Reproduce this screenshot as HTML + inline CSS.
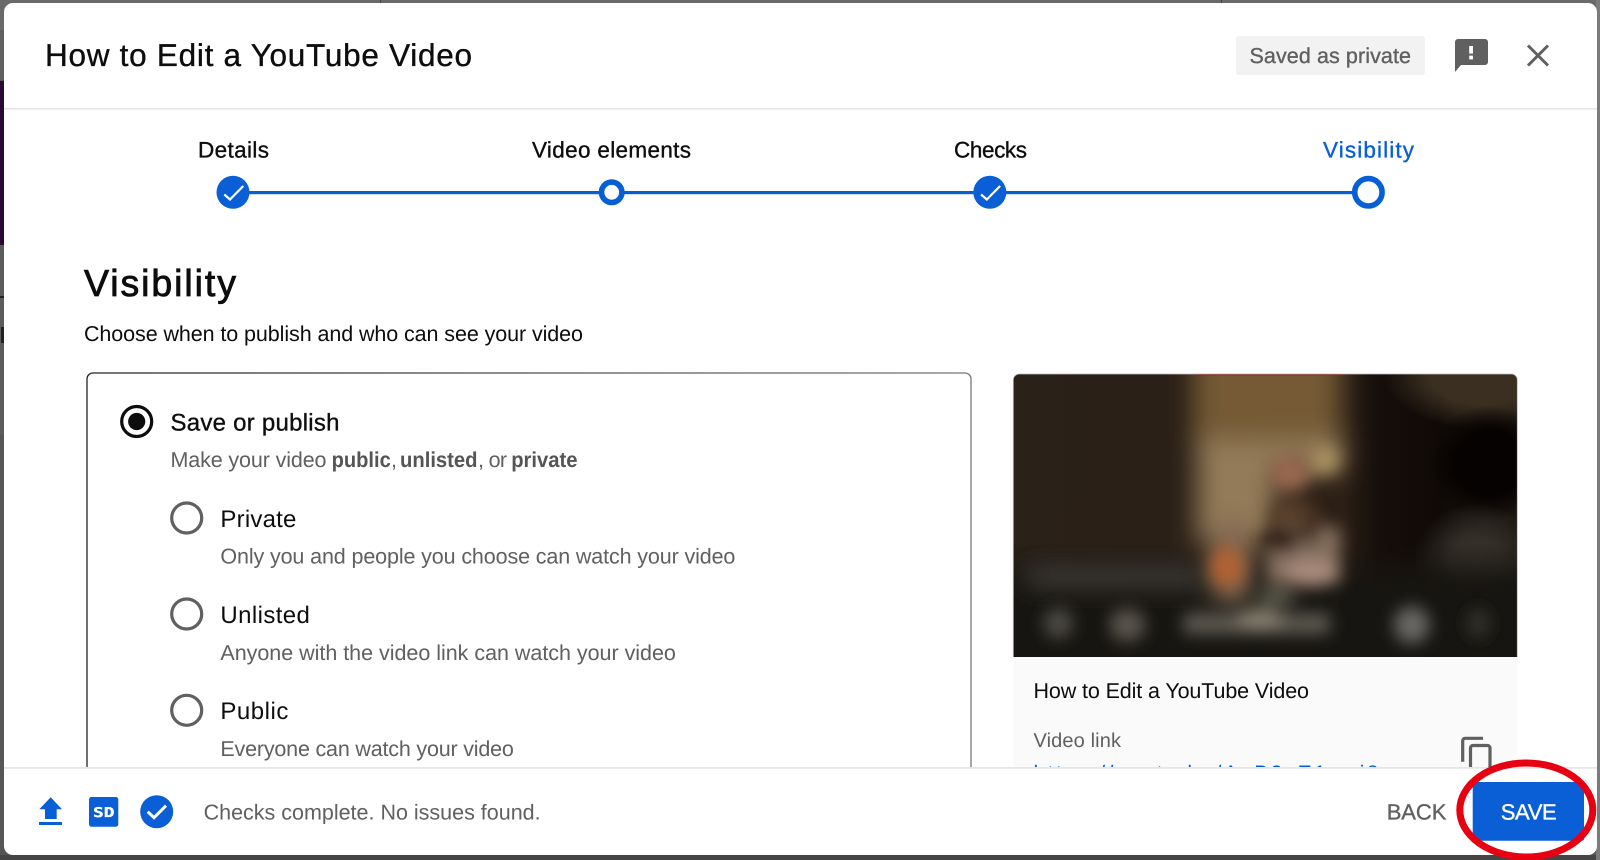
<!DOCTYPE html>
<html lang="en">
<head>
<meta charset="utf-8">
<title>How to Edit a YouTube Video - Visibility</title>
<style>
html,body{margin:0;padding:0;width:1600px;height:860px;overflow:hidden;background:#555}
svg{display:block;position:absolute;left:0;top:0}
text{font-family:"Liberation Sans",Arial,sans-serif;text-rendering:geometricPrecision}
.m{stroke-width:.35px;paint-order:stroke}
.g{fill:#606060}
.k{fill:#0d0d0d}
</style>
</head>
<body>
<svg width="1600" height="860" viewBox="0 0 1600 860" xmlns="http://www.w3.org/2000/svg">
<defs>
<filter id="b" x="-30%" y="-30%" width="160%" height="160%"><feGaussianBlur stdDeviation="38"/></filter>
<filter id="b2" x="-30%" y="-30%" width="160%" height="160%"><feGaussianBlur stdDeviation="24"/></filter>
<clipPath id="tc"><path d="M1013.300 380a6 6 0 0 1 6-6h492a6 6 0 0 1 6 6v277h-504z"/></clipPath>
<clipPath id="body"><rect x="0" y="110" width="1600" height="657"/></clipPath>
<linearGradient id="cs" gradientUnits="userSpaceOnUse" x1="87" y1="0" x2="971" y2="0"><stop offset="0" stop-color="#222"/><stop offset="1" stop-color="#777"/></linearGradient>
<linearGradient id="hb" gradientUnits="userSpaceOnUse" x1="0" y1="0" x2="1536" y2="0">
<stop offset="0" stop-color="#2a2118"/>
<stop offset=".65" stop-color="#2b1f16"/>
<stop offset=".72" stop-color="#150e0a"/>
<stop offset=".84" stop-color="#100a07"/>
<stop offset=".93" stop-color="#1c1610"/>
<stop offset="1" stop-color="#1e1812"/>
</linearGradient>
<linearGradient id="vb" gradientUnits="userSpaceOnUse" x1="0" y1="520" x2="0" y2="650">
<stop offset="0" stop-color="#171511" stop-opacity="0"/>
<stop offset="1" stop-color="#171511"/>
</linearGradient>
<radialGradient id="r1"><stop offset="0" stop-color="#3b2f21"/><stop offset=".55" stop-color="#3b2f21"/><stop offset="1" stop-color="#3b2f21" stop-opacity="0"/></radialGradient>
<radialGradient id="r2"><stop offset="0" stop-color="#060201"/><stop offset=".55" stop-color="#060201"/><stop offset="1" stop-color="#060201" stop-opacity="0"/></radialGradient>
<radialGradient id="r3"><stop offset="0" stop-color="#37322b"/><stop offset=".4" stop-color="#332e27"/><stop offset="1" stop-color="#332e27" stop-opacity="0"/></radialGradient>
</defs>

<!-- backdrop -->
<rect width="1600" height="860" fill="#565656"/>
<rect width="1600" height="30" fill="#696969"/>
<rect x="0" y="30" width="4" height="50" fill="#5f5f5f"/>
<rect x="0" y="81" width="4" height="164" fill="#2a0a35"/>
<rect x="0" y="245" width="4" height="190" fill="#5c5c5c"/>
<rect x="0" y="296" width="4" height="2" fill="#222"/>
<rect x="1" y="327" width="3" height="16" fill="#222"/>
<rect x="0" y="855" width="1600" height="5" fill="#454545"/>
<rect x="1596" y="0" width="4" height="860" fill="#7b7b7b"/>
<rect x="380" y="0" width="1" height="3" fill="#444"/>
<rect x="1221" y="0" width="1" height="3" fill="#444"/>

<!-- modal -->
<rect x="4" y="3" width="1593" height="852" rx="9" fill="#fff"/>
<rect x="4" y="108" width="1593" height="1.600" fill="#e6e6e6"/>

<!-- header -->
<text x="45" y="66" font-size="31.500" class="k m" stroke="#0d0d0d" textLength="427">How to Edit a YouTube Video</text>
<rect x="1236" y="36" width="189" height="39" rx="3" fill="#f2f2f2"/>
<text x="1249.500" y="63" font-size="21.500" class="g m" stroke="#606060" textLength="161.500">Saved as private</text>
<path d="M1458 39h27a3 3 0 0 1 3 3v20a3 3 0 0 1-3 3h-24l-6 7V42a3 3 0 0 1 3-3z" fill="#606060"/>
<rect x="1469.200" y="46" width="3.800" height="7.600" fill="#fff"/>
<rect x="1469.200" y="55.600" width="3.800" height="3.800" fill="#fff"/>
<path d="M1528 45.500L1548 65.500M1548 45.500L1528 65.500" stroke="#606060" stroke-width="3" fill="none"/>

<!-- stepper -->
<text x="198" y="157.500" font-size="22.500" class="k m" stroke="#0d0d0d" textLength="71">Details</text>
<text x="532" y="157.500" font-size="22.500" class="k m" stroke="#0d0d0d" textLength="159">Video elements</text>
<text x="954" y="157.500" font-size="22.500" class="k m" stroke="#0d0d0d" textLength="73">Checks</text>
<text x="1323" y="157.500" font-size="22.500" fill="#065fd4" class="m" stroke="#065fd4" textLength="91">Visibility</text>
<rect x="233" y="191" width="1135" height="3.200" fill="#065fd4"/>
<circle cx="233" cy="192.300" r="16.500" fill="#0b5fd6"/>
<path d="M224.300 194.500L230 199.500L243.300 186" stroke="#fff" stroke-width="2.200" fill="none"/>
<circle cx="611.700" cy="192.300" r="10.200" fill="#fff" stroke="#065fd4" stroke-width="5.600"/>
<circle cx="989.800" cy="192.300" r="16.500" fill="#0b5fd6"/>
<path d="M981.100 194.500L986.800 199.500L1000.100 186" stroke="#fff" stroke-width="2.200" fill="none"/>
<circle cx="1368.400" cy="192.300" r="13.700" fill="#fff" stroke="#065fd4" stroke-width="5.600"/>

<!-- heading -->
<text x="84" y="296" font-size="37.500" class="k" stroke="#0d0d0d" stroke-width=".8" textLength="152">Visibility</text>
<text x="84" y="341" font-size="21.500" class="k" textLength="499">Choose when to publish and who can see your video</text>

<!-- card + preview, clipped by footer -->
<g clip-path="url(#body)">
<path d="M87 800V379a6 6 0 0 1 6-6h872a6 6 0 0 1 6 6v421" fill="#fff" stroke="url(#cs)" stroke-width="1.300"/>

<rect x="1013.300" y="657" width="504" height="120" fill="#fafafa"/>
<text x="1033.500" y="698" font-size="21.500" class="k" textLength="275.500">How to Edit a YouTube Video</text>
<text x="1033.500" y="747" font-size="20" class="g" textLength="87.500">Video link</text>
<text x="1033.500" y="780" font-size="21" fill="#065fd4" textLength="345">https://youtu.be/AqB2cE1qwi8</text>
<path d="M1483 738.300h-17.800a2.500 2.500 0 0 0-2.500 2.500v21" fill="none" stroke="#606060" stroke-width="3.200"/>
<path d="M1470.500 770V748a2.500 2.500 0 0 1 2.500-2.500h14.500a2.500 2.500 0 0 1 2.500 2.500v22" fill="none" stroke="#606060" stroke-width="3.200"/>
</g>

<!-- radio: save or publish -->
<circle cx="136.700" cy="421.500" r="15" fill="#fff" stroke="#0d0d0d" stroke-width="3.200"/>
<circle cx="136.700" cy="421.500" r="8.600" fill="#0d0d0d"/>
<text x="170.500" y="430.500" font-size="24" class="k m" stroke="#0d0d0d" textLength="169">Save or publish</text>
<text x="170.500" y="467" font-size="21.500" class="g" textLength="156">Make your video</text>
<text x="331.600" y="467" font-size="21.500" font-weight="700" fill="#555" textLength="59.200" lengthAdjust="spacingAndGlyphs">public</text>
<text x="391" y="467" font-size="21.500" class="g">,</text>
<text x="400" y="467" font-size="21.500" font-weight="700" fill="#555" textLength="77.500" lengthAdjust="spacingAndGlyphs">unlisted</text>
<text x="478" y="467" font-size="21.500" class="g" textLength="29">, or</text>
<text x="511.200" y="467" font-size="21.500" font-weight="700" fill="#555" textLength="66.300" lengthAdjust="spacingAndGlyphs">private</text>

<circle cx="186.700" cy="518" r="15" fill="#fff" stroke="#606060" stroke-width="3.200"/>
<text x="220.400" y="527" font-size="24" class="k" textLength="76">Private</text>
<text x="220.400" y="563.500" font-size="21.500" class="g" textLength="515">Only you and people you choose can watch your video</text>

<circle cx="186.700" cy="614" r="15" fill="#fff" stroke="#606060" stroke-width="3.200"/>
<text x="220.400" y="623" font-size="24" class="k" textLength="89.500">Unlisted</text>
<text x="220.400" y="660" font-size="21.500" class="g" textLength="455.500">Anyone with the video link can watch your video</text>

<circle cx="186.700" cy="710.300" r="15" fill="#fff" stroke="#606060" stroke-width="3.200"/>
<text x="220.400" y="719" font-size="24" class="k" textLength="68">Public</text>
<text x="220.400" y="756" font-size="21.500" class="g" textLength="293.500">Everyone can watch your video</text>

<!-- thumbnail -->
<g clip-path="url(#tc)">
<rect x="1013.300" y="374" width="504" height="283" fill="#2b2118"/>
<g transform="translate(1010 370) scale(.33333)">
<rect x="0" y="0" width="1536" height="880" fill="url(#hb)"/>
<ellipse cx="1420" cy="10" rx="300" ry="170" fill="url(#r1)"/>
<ellipse cx="1440" cy="280" rx="190" ry="175" fill="url(#r2)"/>
<ellipse cx="1400" cy="570" rx="190" ry="170" fill="url(#r3)"/>
<rect x="0" y="520" width="1536" height="360" fill="url(#vb)"/>
<g filter="url(#b)">
<rect x="550" y="-200" width="440" height="430" fill="#755a36"/>
<rect x="560" y="210" width="240" height="310" fill="#937a58"/>
<rect x="790" y="200" width="210" height="110" fill="#8d7653"/>
<rect x="610" y="450" width="110" height="250" fill="#846a52"/>
<rect x="50" y="600" width="530" height="46" fill="#4c4a45"/>
</g>
<g filter="url(#b2)">
<ellipse cx="945" cy="270" rx="40" ry="40" fill="#ab9363"/>
<ellipse cx="840" cy="310" rx="62" ry="52" fill="#98674f"/>
<ellipse cx="850" cy="440" rx="80" ry="50" fill="#58402b"/>
<rect x="770" y="470" width="220" height="170" fill="#85705f"/>
<ellipse cx="810" cy="510" rx="60" ry="38" fill="#301f13"/>
<ellipse cx="900" cy="470" rx="35" ry="55" fill="#4a3220"/>
<ellipse cx="905" cy="610" rx="78" ry="40" fill="#a98b7d"/>
<ellipse cx="650" cy="590" rx="50" ry="60" fill="#b36233"/>
<ellipse cx="800" cy="680" rx="60" ry="26" fill="#5c5c4e"/>
<ellipse cx="145" cy="760" rx="44" ry="46" fill="#4d4c46"/>
<ellipse cx="352" cy="765" rx="54" ry="50" fill="#5a544e"/>
<rect x="520" y="730" width="440" height="62" fill="#5d5a51"/>
<ellipse cx="750" cy="745" rx="70" ry="30" fill="#868070"/>
<ellipse cx="1205" cy="765" rx="54" ry="56" fill="#686865"/>
<ellipse cx="1405" cy="760" rx="34" ry="46" fill="#33312c"/>
</g>
</g>
<rect x="1196" y="374" width="148" height="1.200" fill="#7a1c10"/>
</g>
<path d="M1013.300 657V380a6 6 0 0 1 6-6h492a6 6 0 0 1 6 6v277" fill="none" stroke="#bdbdbd" stroke-width=".8"/>

<!-- footer -->
<rect x="4" y="767" width="1593" height="1.800" fill="#e6e6e6"/>
<path d="M50.700 797.300L62 809.300H56.700V819H45V809.300H39.300z" fill="#065fd4"/>
<rect x="39" y="822" width="23" height="3" fill="#065fd4"/>
<rect x="89" y="797" width="29.300" height="29.700" rx="2.500" fill="#0b5fd6"/>
<text x="93" y="817" font-size="13.500" font-weight="700" fill="#fff" stroke="#fff" stroke-width=".3" style="font-family:'DejaVu Sans Mono','DejaVu Sans',monospace" textLength="21.500" lengthAdjust="spacingAndGlyphs">SD</text>
<circle cx="156.700" cy="811.700" r="16.500" fill="#0b5fd6"/>
<path d="M147.700 811.700L154 817.700L166 805.700" stroke="#fff" stroke-width="3" fill="none"/>
<text x="203.600" y="819.300" font-size="21.500" class="g" textLength="337">Checks complete. No issues found.</text>

<text x="1386.700" y="819.300" font-size="22" class="g m" stroke="#606060" textLength="59.700">BACK</text>
<rect x="1472.700" y="782" width="111.300" height="58.700" rx="2" fill="#0b5fd6"/>
<text x="1500.700" y="819.300" font-size="22" fill="#fff" class="m" stroke="#fff" textLength="56">SAVE</text>

<!-- red annotation -->
<ellipse cx="1526.300" cy="810" rx="66.500" ry="47" fill="none" stroke="#e60012" stroke-width="7"/>
</svg>
</body>
</html>
